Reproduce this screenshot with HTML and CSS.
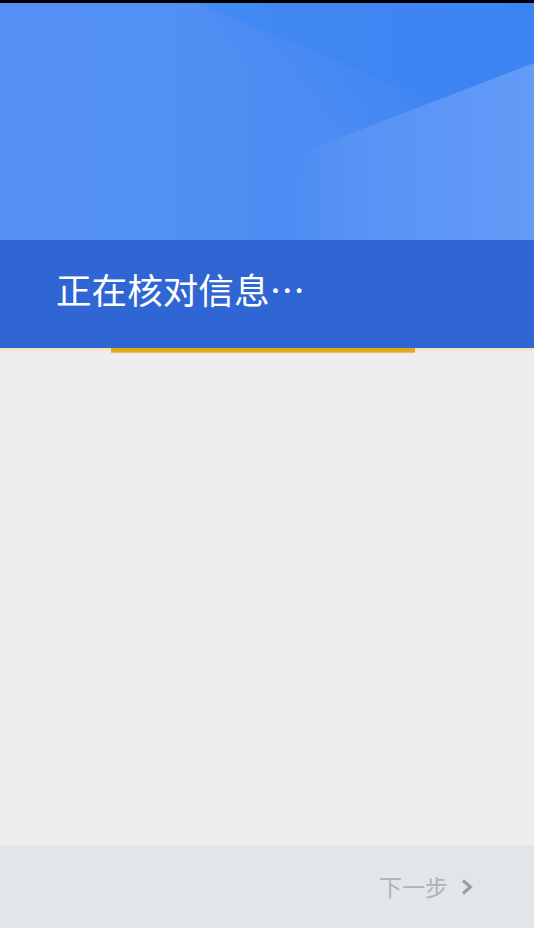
FILE: index.html
```html
<!DOCTYPE html>
<html lang="zh-CN">
<head>
<meta charset="utf-8">
<title>正在核对信息</title>
<link rel="stylesheet" href="styles.css">
</head>
<body>
<div class="screen">
  <div class="status"></div>
  <div class="hero">
    <svg class="hero-art" viewBox="0 0 534 237" preserveAspectRatio="none" xmlns="http://www.w3.org/2000/svg">
      <defs>
        <linearGradient id="base" x1="0" y1="0" x2="1" y2="0">
          <stop offset="0" stop-color="#5591f4"/>
          <stop offset="0.3" stop-color="#5390f4"/>
          <stop offset="0.45" stop-color="#4f8df3"/>
          <stop offset="1" stop-color="#4b8af3"/>
        </linearGradient>
        <linearGradient id="dark" x1="0" y1="0" x2="1" y2="0">
          <stop offset="0" stop-color="#428af4"/>
          <stop offset="0.4" stop-color="#3f86f3"/>
          <stop offset="1" stop-color="#3c84f2"/>
        </linearGradient>
        <linearGradient id="soft" gradientUnits="userSpaceOnUse" x1="250" y1="68" x2="351" y2="-9">
          <stop offset="0" stop-color="#4f8df3"/>
          <stop offset="1" stop-color="#3f86f3"/>
        </linearGradient>
        <linearGradient id="light" gradientUnits="userSpaceOnUse" x1="270" y1="0" x2="534" y2="0">
          <stop offset="0" stop-color="#4b8af3"/>
          <stop offset="0.3" stop-color="#5792f5"/>
          <stop offset="1" stop-color="#639bf7"/>
        </linearGradient>
      </defs>
      <rect x="0" y="0" width="534" height="237" fill="url(#base)"/>
      <polygon points="198,0 434,99 310,146" fill="url(#soft)"/>
      <polygon points="198,0 534,0 534,60 434,99" fill="url(#dark)"/>
      <polygon points="310,146 534,60 534,237 280,237" fill="url(#light)"/>
    </svg>
  </div>
  <div class="titlebar">
    <h1 class="title">正在核对信息…</h1>
  </div>
  <div class="progress">
    <div class="progress-fill"></div>
  </div>
  <main class="content"></main>
  <footer class="footer">
    <button class="next" type="button">
      <span class="next-label">下一步</span>
      <svg class="chev" viewBox="0 0 12 16" xmlns="http://www.w3.org/2000/svg">
        <polyline points="2,1.5 9.5,8 2,14.5" fill="none" stroke="#9a9ea2" stroke-width="3" stroke-linejoin="miter"/>
      </svg>
    </button>
  </footer>
</div>
</body>
</html>
```
FILE: styles.css
```css
html, body {
  margin: 0;
  padding: 0;
}
body {
  font-family: "Noto Sans CJK SC", "Noto Sans", sans-serif;
  background: #eeeeee;
}
.screen {
  width: 534px;
  height: 928px;
  display: flex;
  flex-direction: column;
  overflow: hidden;
}
.status {
  height: 3px;
  background: #000;
  flex: none;
}
.hero {
  height: 237px;
  flex: none;
}
.hero-art {
  display: block;
  width: 100%;
  height: 100%;
}
.titlebar {
  height: 108px;
  flex: none;
  background: #2f66d3;
  display: flex;
  align-items: center;
  padding-left: 56px;
  box-sizing: border-box;
}
.title {
  margin: 0;
  color: #ffffff;
  font-weight: 400;
  font-size: 35.6px;
  line-height: 1;
  letter-spacing: 0;
  padding-bottom: 10px;
}
.progress {
  height: 5px;
  flex: none;
  background: linear-gradient(#f2dcb0 0, #f4e6cc 2px, #f0ede8 3px, #eeeeee 5px);
  padding-left: 111px;
}
.progress-fill {
  width: 304px;
  height: 5px;
  background: linear-gradient(#e2a51a 0, #e6aa1c 4px, #eed39a 5px);
}
.content {
  flex: 1;
  background: #eeeeee;
}
.footer {
  height: 83px;
  flex: none;
  background: #e2e6e9;
  display: flex;
  align-items: center;
  justify-content: flex-end;
  padding-right: 61px;
}
.next {
  border: 0;
  background: none;
  padding: 0;
  margin: 0;
  display: flex;
  align-items: center;
  gap: 13px;
  font-family: inherit;
  cursor: pointer;
}
.next-label {
  font-size: 23px;
  color: #b0b3b6;
  line-height: 1;
}
.chev {
  width: 12px;
  height: 16px;
  display: block;
}
```
